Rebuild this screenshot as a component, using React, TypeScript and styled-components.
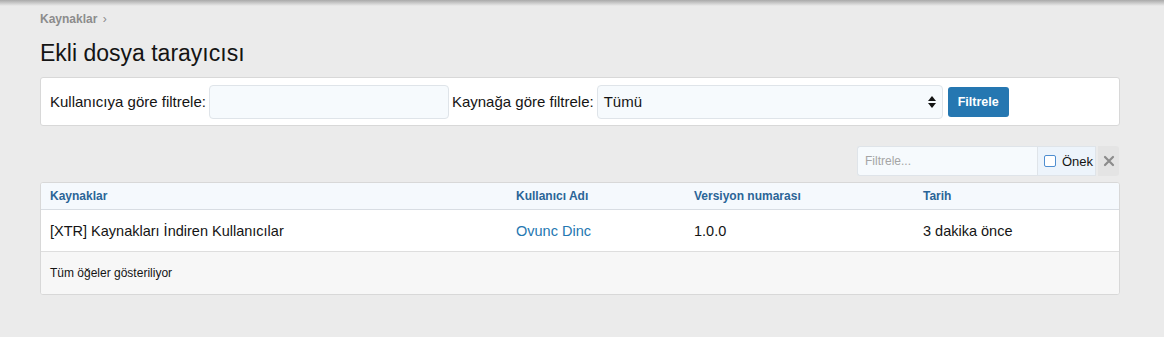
import styled, { createGlobalStyle } from "styled-components";

const GlobalStyle = createGlobalStyle`
  html, body {
    margin: 0;
    padding: 0;
    background: #ebebeb;
  }
  body {
    font-family: "Liberation Sans", Arial, sans-serif;
    color: #141414;
  }
`;

const columns = "466px 178px 229px 1fr";

function App() {
  return (
    <Page>
      <GlobalStyle />
      <TopShadow />
      <Content>
        <Breadcrumb>
          Kaynaklar <span className="sep">›</span>
        </Breadcrumb>
        <Title>Ekli dosya tarayıcısı</Title>

        {/* filtre formu */}
        <FilterBlock>
          <Label>Kullanıcıya göre filtrele:</Label>
          <TextInput $width={240} />
          <Label>Kaynağa göre filtrele:</Label>
          <SelectBox>
            <span>Tümü</span>
            <svg width="8" height="12" viewBox="0 0 8 12">
              <path d="M4 0 L8 5 H0 Z" fill="#141414" />
              <path d="M4 12 L8 7 H0 Z" fill="#141414" />
            </svg>
          </SelectBox>
          <PrimaryButton>Filtrele</PrimaryButton>
        </FilterBlock>

        {/* hızlı filtre */}
        <QuickFilterRow>
          <QuickFilter>
            <QuickInput placeholder="Filtrele..." />
            <PrefixAddon>
              <CheckBox />
              Önek
            </PrefixAddon>
            <ClearButton>
              <svg width="12" height="12" viewBox="0 0 12 12">
                <path
                  d="M2 2 L10 10 M10 2 L2 10"
                  stroke="#8c8c8c"
                  strokeWidth="2.2"
                  strokeLinecap="round"
                />
              </svg>
            </ClearButton>
          </QuickFilter>
        </QuickFilterRow>

        {/* tablo */}
        <TableBlock>
          <HeaderRow>
            <HeadCell>Kaynaklar</HeadCell>
            <HeadCell>Kullanıcı Adı</HeadCell>
            <HeadCell>Versiyon numarası</HeadCell>
            <HeadCell>Tarih</HeadCell>
          </HeaderRow>
          <DataRow>
            <Cell>[XTR] Kaynakları İndiren Kullanıcılar</Cell>
            <Cell $link>Ovunc Dinc</Cell>
            <Cell>1.0.0</Cell>
            <Cell>3 dakika önce</Cell>
          </DataRow>
          <Footer>Tüm öğeler gösteriliyor</Footer>
        </TableBlock>
      </Content>
    </Page>
  );
}

export default App;

const Page = styled.div`
  min-height: 337px;
`;

const TopShadow = styled.div`
  height: 6px;
  background: linear-gradient(#a9a9a9, #ebebeb);
`;

const Content = styled.div`
  padding: 6px 44px 0 40px;
`;

const Breadcrumb = styled.div`
  font-size: 12px;
  font-weight: 700;
  color: #8c8c8c;
  line-height: 15px;
  height: 15px;

  .sep {
    font-weight: 400;
    margin-left: 2px;
  }
`;

const Title = styled.h1`
  margin: 11px 0 0;
  font-size: 23px;
  font-weight: 400;
  line-height: 30px;
  color: #141414;
`;

const FilterBlock = styled.div`
  margin-top: 9px;
  height: 49px;
  box-sizing: border-box;
  background: #fff;
  border: 1px solid #d8d8d8;
  border-radius: 3px;
  display: flex;
  align-items: center;
  padding: 0 9px;
  gap: 3px;
`;

const Label = styled.span`
  font-size: 15px;
  color: #141414;
`;

const TextInput = styled.div<{ $width: number }>`
  width: ${(p) => p.$width}px;
  height: 34px;
  box-sizing: border-box;
  background: #f6fafd;
  border: 1px solid #dfe4e9;
  border-radius: 4px;
`;

const SelectBox = styled.div`
  width: 346px;
  height: 34px;
  box-sizing: border-box;
  background: #f6fafd;
  border: 1px solid #dfe4e9;
  border-radius: 4px;
  display: flex;
  align-items: center;
  justify-content: space-between;
  padding: 0 6px 0 6px;
  font-size: 15px;
  color: #141414;
`;

const PrimaryButton = styled.button`
  margin-left: 2px;
  height: 30px;
  padding: 0 10px;
  border: 0;
  border-radius: 3px;
  background: #2577b1;
  color: #fff;
  font-family: "Liberation Sans", Arial, sans-serif;
  font-size: 12.5px;
  font-weight: 700;
`;

const QuickFilterRow = styled.div`
  margin-top: 20px;
  display: flex;
  justify-content: flex-end;
`;

const QuickFilter = styled.div`
  display: flex;
  align-items: stretch;
  height: 30px;
  margin-right: 1px;
`;

const QuickInput = styled.input`
  width: 180px;
  box-sizing: border-box;
  border: 1px solid #dfe4e9;
  border-right: 0;
  border-radius: 3px 0 0 3px;
  background: #f6fafd;
  padding: 0 7px;
  font-family: "Liberation Sans", Arial, sans-serif;
  font-size: 12px;
  outline: none;

  &::placeholder {
    color: #a5a5a5;
  }
`;

const PrefixAddon = styled.label`
  display: flex;
  align-items: center;
  gap: 6px;
  width: 59px;
  box-sizing: border-box;
  padding-left: 6px;
  border: 1px solid #dfe4e9;
  background: #edf4fb;
  font-size: 13px;
  color: #141414;
`;

const CheckBox = styled.span`
  width: 10px;
  height: 10px;
  border: 1.5px solid #4f8ed0;
  border-radius: 2px;
  background: #fff;
`;

const ClearButton = styled.span`
  margin-left: 2px;
  width: 21px;
  display: flex;
  align-items: center;
  justify-content: center;
  background: #e4e4e4;
  border-radius: 0 3px 3px 0;
`;

const TableBlock = styled.div`
  margin-top: 6px;
  background: #fff;
  border: 1px solid #d8d8d8;
  border-radius: 3px;
  overflow: hidden;
`;

const HeaderRow = styled.div`
  display: grid;
  grid-template-columns: ${columns};
  height: 26px;
  align-items: center;
  background: #f5f9fd;
  border-bottom: 1px solid #d8dde3;
`;

const HeadCell = styled.div`
  padding-left: 9px;
  font-size: 12px;
  font-weight: 700;
  color: #2b6597;
`;

const DataRow = styled.div`
  display: grid;
  grid-template-columns: ${columns};
  height: 41px;
  align-items: center;
  border-bottom: 1px solid #dedede;
`;

const Cell = styled.div<{ $link?: boolean }>`
  padding-left: 9px;
  font-size: 14.5px;
  color: ${(p) => (p.$link ? "#2577b1" : "#141414")};
`;

const Footer = styled.div`
  height: 42px;
  display: flex;
  align-items: center;
  padding-left: 9px;
  background: #f7f7f7;
  font-size: 12px;
  color: #141414;
`;
